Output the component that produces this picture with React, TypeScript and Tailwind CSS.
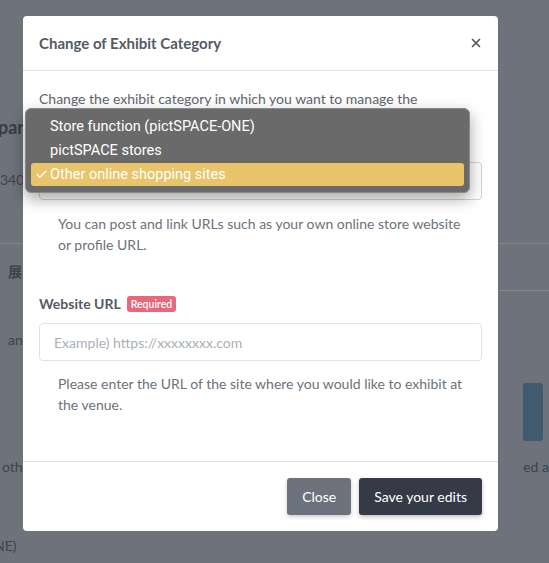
import { Check, X } from "lucide-react";

const FONT = { fontFamily: "Lato, 'Noto Sans CJK JP', sans-serif" };
const MENU_FONT = { fontFamily: "Roboto, 'Liberation Sans', sans-serif" };

const OPTIONS = ["Store function (pictSPACE-ONE)", "pictSPACE stores", "Other online shopping sites"];

function Background() {
  return (
    <div className="flex h-[563px] w-[549px] flex-col bg-[#6e727b] text-[14px] text-[#3f434a]" style={FONT}>
      <div className="h-[117px]" />
      <div className="text-[18px] font-bold leading-[20px] text-[#3a3d43]">
        <span className="-ml-[2px]">par</span>
      </div>
      <div className="mt-[33px] leading-[20px]">340</div>
      <div className="mt-[53px] border-t border-[#83868d]" />
      <div className="mt-[18px] pl-[8px] font-bold leading-[20px]">展</div>
      <div className="mt-[8px] ml-auto w-[52px] border-t border-[#83868d]" />
      <div className="mt-[39px] pl-[8px] leading-[20px]">and</div>
      <div className="mt-[33px] flex justify-end pr-[6px]">
        <div className="h-[58px] w-[20px] rounded-[3px] bg-[#405a6f]" />
      </div>
      <div className="mt-[16px] flex justify-between pl-[2px] leading-[20px]">
        <span>oth</span>
        <span>ed a</span>
      </div>
      <div className="mt-[59px] -ml-[6px] leading-[20px]">NE)</div>
    </div>
  );
}

function DropdownMenu() {
  return (
    <div
      className="absolute left-[25px] top-[108px] flex w-[445px] flex-col rounded-[6px] border border-[#8a8a8a] bg-[#6a6a6a] px-[5px] py-[6px] text-[14.5px] text-white shadow-[0_6px_16px_rgba(0,0,0,0.35)]"
      style={MENU_FONT}
    >
      {OPTIONS.map((option, i) => {
        const selected = i === OPTIONS.length - 1;
        return (
          <div
            key={option}
            className={
              selected
                ? "flex h-[23px] items-center rounded-[3px] bg-[#e8c46a]"
                : "flex h-[24px] items-center"
            }
          >
            <span className="flex w-[19px] justify-end pr-[2px]">
              {selected && <Check size={13} strokeWidth={2.5} />}
            </span>
            <span>{option}</span>
          </div>
        );
      })}
    </div>
  );
}

export default function App() {
  return (
    <div className="relative h-[563px] w-[549px] overflow-hidden">
      <Background />

      <div
        className="absolute left-[23px] top-[16px] flex w-[475px] flex-col rounded-[4px] bg-white text-[14px] text-[#60656e]"
        style={FONT}
      >
        <div className="flex h-[55px] items-center justify-between border-b border-[#dee2e6] pl-[16px] pr-[15px]">
          <h2 className="text-[15px] font-bold text-[#555a63]">Change of Exhibit Category</h2>
          <button type="button" className="text-[#555a63]">
            <X size={14} strokeWidth={3} />
          </button>
        </div>

        <div className="flex flex-col px-[16px] pt-[17px]">
          <p className="leading-[21px] text-[#60656e]">
            Change the exhibit category in which you want to manage the
          </p>
          <div className="mt-[53px] h-[38px] w-full rounded-[4px] border border-[#ced4da]" />
          <p className="mt-[13px] pl-[19px] pr-[10px] leading-[21px] text-[#6c727b]">
            You can post and link URLs such as your own online store website or profile URL.
          </p>

          <div className="mt-[38px] flex items-center gap-[6px]">
            <span className="font-bold text-[#555a63]">Website URL</span>
            <span className="rounded-[3px] bg-[#e8677d] px-[4px] text-[10.5px] font-semibold leading-[16px] text-white">
              Required
            </span>
          </div>
          <input
            type="text"
            placeholder="Example) https://xxxxxxxx.com"
            className="mt-[9px] h-[38px] w-full rounded-[4px] border border-[#dfe3e8] px-[14px] text-[14px] placeholder:text-[#aab0b8] outline-none"
          />
          <p className="mt-[12px] pl-[19px] pr-[10px] leading-[21px] text-[#6c727b]">
            Please enter the URL of the site where you would like to exhibit at the venue.
          </p>
        </div>

        <div className="mt-[46px] flex justify-end gap-[8px] border-t border-[#dee2e6] px-[16px] pb-[16px] pt-[16px]">
          <button
            type="button"
            className="h-[37px] rounded-[3px] bg-[#6c737d] px-[15px] text-white shadow-[0_2px_4px_rgba(0,0,0,0.2)]"
          >
            Close
          </button>
          <button
            type="button"
            className="h-[37px] rounded-[3px] bg-[#343a46] px-[15px] text-white shadow-[0_2px_4px_rgba(0,0,0,0.25)]"
          >
            Save your edits
          </button>
        </div>
      </div>

      <DropdownMenu />
    </div>
  );
}
